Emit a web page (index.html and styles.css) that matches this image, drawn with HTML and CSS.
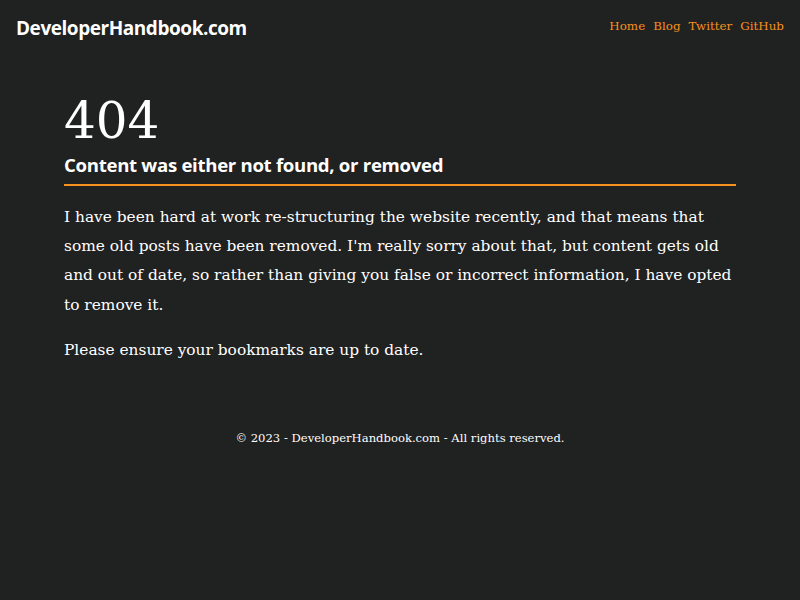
FILE: index.html
```html
<!DOCTYPE html>
<html lang="en">
<head>
<meta charset="utf-8">
<title>404 - DeveloperHandbook.com</title>
<link rel="stylesheet" href="styles.css">
</head>
<body>
<header class="site-header">
  <a class="brand" href="#">DeveloperHandbook.com</a>
  <nav class="nav">
    <a href="#">Home</a>
    <a href="#">Blog</a>
    <a href="#">Twitter</a>
    <a href="#">GitHub</a>
  </nav>
</header>
<main class="content">
  <h1 class="code">404</h1>
  <h2 class="subtitle">Content was either not found, or removed</h2>
  <p>I have been hard at work re-structuring the website recently, and that means that some old posts have been removed. I'm really sorry about that, but content gets old and out of date, so rather than giving you false or incorrect information, I have opted to remove it.</p>
  <p>Please ensure your bookmarks are up to date.</p>
</main>
<footer class="site-footer">© 2023 - DeveloperHandbook.com - All rights reserved.</footer>
</body>
</html>
```
FILE: styles.css
```css
html, body {
  margin: 0;
  padding: 0;
  background: #202121;
  color: #ffffff;
  font-family: "DejaVu Serif", serif;
}
.site-header {
  display: flex;
  justify-content: space-between;
  align-items: center;
  padding: 16px 16px 0 16px;
  height: 24px;
}
.brand {
  font-family: "Open Sans", sans-serif;
  font-weight: 700;
  font-size: 19px;
  color: #ffffff;
  text-decoration: none;
  letter-spacing: -0.45px;
}
.nav {
  display: flex;
  gap: 8px;
  align-self: flex-start;
  padding-top: 3px;
}
.nav a {
  color: #f7901e;
  text-decoration: none;
  font-size: 11.9px;
}
.content {
  margin: 0 64px;
  padding-top: 51px;
}
.code {
  font-family: "DejaVu Serif", serif;
  font-weight: 400;
  font-size: 50px;
  line-height: 60px;
  margin: 0;
}
.subtitle {
  font-family: "Open Sans", sans-serif;
  font-weight: 700;
  font-size: 18.6px;
  line-height: 28px;
  margin: 0;
  padding-bottom: 5px;
  border-bottom: 2px solid #f7901e;
  letter-spacing: -0.3px;
}
.content p {
  font-size: 15.4px;
  line-height: 29.2px;
  margin: 17px 0 0 0;
}
.content p + p {
  margin-top: 16px;
}
.site-footer {
  text-align: center;
  font-size: 11.6px;
  margin-top: 66px;
}
```
